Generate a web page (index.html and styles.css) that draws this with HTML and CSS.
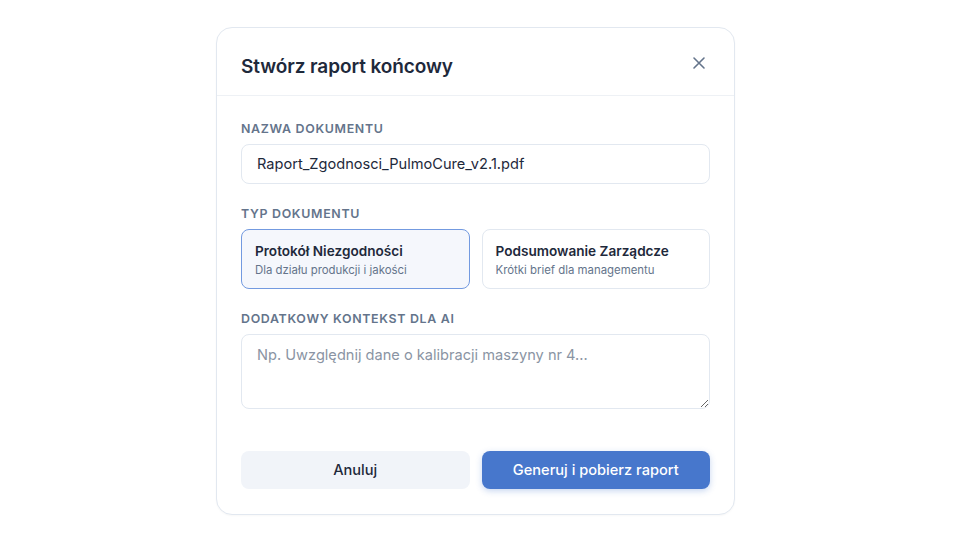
FILE: index.html
```html
<!DOCTYPE html>
<html lang="pl">
<head>
<meta charset="utf-8">
<title>Stwórz raport końcowy</title>
<link rel="stylesheet" href="styles.css">
</head>
<body>
<div class="page">
  <div class="modal">
    <div class="modal-header">
      <h2 class="modal-title">Stwórz raport końcowy</h2>
      <button class="close-btn" aria-label="Zamknij">
        <svg width="14" height="14" viewBox="0 0 14 14" fill="none" stroke="#64748b" stroke-width="1.6" stroke-linecap="round"><path d="M2 2L12 12M12 2L2 12"/></svg>
      </button>
    </div>
    <div class="modal-body">
      <div class="field">
        <label class="label">Nazwa dokumentu</label>
        <input class="input" type="text" value="Raport_Zgodnosci_PulmoCure_v2.1.pdf">
      </div>
      <div class="field">
        <label class="label">Typ dokumentu</label>
        <div class="options">
          <div class="option selected">
            <div class="option-title">Protokół Niezgodności</div>
            <div class="option-sub">Dla działu produkcji i jakości</div>
          </div>
          <div class="option">
            <div class="option-title">Podsumowanie Zarządcze</div>
            <div class="option-sub">Krótki brief dla managementu</div>
          </div>
        </div>
      </div>
      <div class="field">
        <label class="label">Dodatkowy kontekst dla AI</label>
        <textarea class="textarea" placeholder="Np. Uwzględnij dane o kalibracji maszyny nr 4..."></textarea>
      </div>
    </div>
    <div class="modal-footer">
      <button class="btn btn-secondary">Anuluj</button>
      <button class="btn btn-primary">Generuj i pobierz raport</button>
    </div>
  </div>
</div>
</body>
</html>
```

FILE: styles.css
```css
* { box-sizing: border-box; }
html, body { margin: 0; padding: 0; background: #ffffff; }
body {
  font-family: Inter, "Noto Sans", "Liberation Sans", sans-serif;
  color: #1e293b;
  width: 960px;
  height: 540px;
  overflow: hidden;
}
.page {
  display: flex;
  justify-content: flex-start;
  padding-top: 27px;
  padding-left: 216px;
}
.modal {
  width: 519px;
  height: 488px;
  background: #ffffff;
  border: 1px solid #e2e8f0;
  border-radius: 16px;
  box-shadow: 0 1px 2px rgba(15, 23, 42, 0.03);
  display: flex;
  flex-direction: column;
}
.modal-header {
  height: 68px;
  display: flex;
  align-items: center;
  justify-content: space-between;
  padding: 0 28px 0 24px;
  border-bottom: 1px solid #eef1f5;
}
.modal-title {
  margin: 0;
  font-size: 19px;
  font-weight: 600;
  color: #1e293b;
  letter-spacing: -0.005em;
  padding-top: 10px;
}
.close-btn {
  border: 0;
  background: none;
  padding: 0;
  width: 14px;
  height: 14px;
  display: flex;
  cursor: pointer;
  margin-top: 2px;
}
.modal-body {
  padding: 24px 24px 0 24px;
  display: flex;
  flex-direction: column;
  gap: 21px;
}
.field {
  display: flex;
  flex-direction: column;
  gap: 8px;
}
.label {
  font-size: 12.4px;
  line-height: 16px;
  font-weight: 600;
  letter-spacing: 0.055em;
  text-transform: uppercase;
  color: #64748b;
  padding-top: 1px;
  margin-bottom: -1px;
}
.input {
  height: 40px;
  border: 1px solid #e2e8f0;
  border-radius: 8px;
  padding: 0 15px;
  font-family: inherit;
  font-size: 14.6px;
  color: #1e293b;
  background: #fff;
  outline: none;
}
.options {
  display: grid;
  grid-template-columns: 1fr 1fr;
  gap: 12px;
}
.option {
  height: 60px;
  border: 1px solid #e2e8f0;
  border-radius: 8px;
  padding: 12px 13px;
  display: flex;
  flex-direction: column;
  gap: 3px;
  background: #fff;
}
.option.selected {
  background: #f5f7fc;
  border-color: #739ae0;
}
.option-title {
  font-size: 13.6px;
  line-height: 18px;
  font-weight: 600;
  color: #1e293b;
}
.option-sub {
  font-size: 11.4px;
  line-height: 15px;
  color: #64748b;
}
.textarea {
  height: 75px;
  border: 1px solid #e2e8f0;
  border-radius: 8px;
  padding: 10px 15px;
  font-family: inherit;
  font-size: 14.6px;
  line-height: 20px;
  color: #1e293b;
  resize: vertical;
  outline: none;
}
.textarea::placeholder { color: #8a94a3; }
.modal-footer {
  display: grid;
  grid-template-columns: 1fr 1fr;
  gap: 12px;
  padding: 0 24px;
  margin-top: 42px;
}
.btn {
  height: 38px;
  border: 0;
  border-radius: 8px;
  font-family: inherit;
  font-size: 14.6px;
  font-weight: 500;
  cursor: pointer;
}
.btn-secondary {
  background: #f1f4f9;
  color: #1e293b;
}
.btn-primary {
  background: #4777cc;
  color: #ffffff;
  box-shadow: 0 2px 6px rgba(71, 119, 204, 0.3);
}
```
